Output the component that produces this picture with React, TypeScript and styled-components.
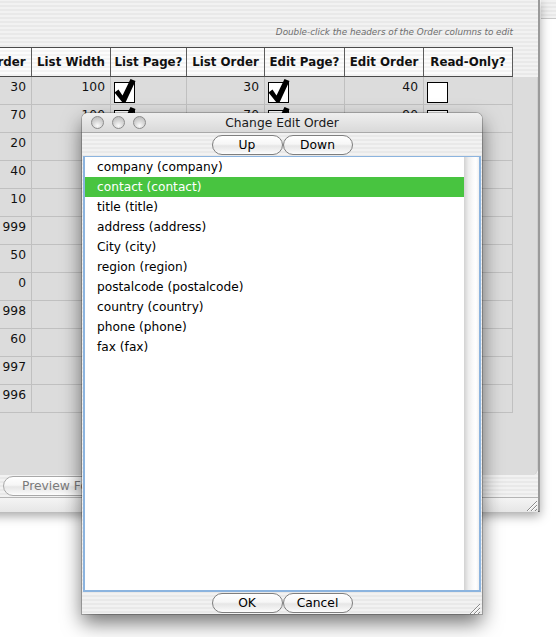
import React from 'react'
import styled, { createGlobalStyle } from 'styled-components'

const GlobalStyle = createGlobalStyle`
  body {
    margin: 0;
    background: #ffffff;
    font-family: 'DejaVu Sans', 'Liberation Sans', sans-serif;
  }
`

const pinstripes = 'repeating-linear-gradient(to bottom, #f2f2f2 0px, #f2f2f2 2px, #e9e9e9 2px, #e9e9e9 4px)'

const Desktop = styled.div`
  position: relative;
  width: 556px;
  height: 637px;
  overflow: hidden;
  background: #ffffff;
`

// window peeking in at the top right corner
const OtherWindow = styled.div`
  position: absolute;
  left: 541px;
  top: 0;
  width: 30px;
  height: 18px;
  background: ${pinstripes};
  border-bottom: 1px solid #c8c8c8;
`

const BackWindow = styled.div`
  position: absolute;
  left: -50px;
  top: -1px;
  width: 590px;
  height: 513px;
  box-sizing: border-box;
  display: flex;
  flex-direction: column;
  background: ${pinstripes};
  border-right: 2px solid #9a9a9a;
  border-bottom: 1px solid #4e4e4e;
  box-shadow: 0 4px 10px rgba(0, 0, 0, 0.35);
`

const HintRow = styled.div`
  height: 48px;
  flex: none;
  display: flex;
  align-items: flex-end;
  justify-content: flex-end;
  padding: 0 25px 9px 0;
  box-sizing: border-box;
  font-size: 8.8px;
  line-height: 12px;
  font-style: italic;
  color: #6e6e6e;
`

const TablePanel = styled.div`
  height: 428px;
  flex: none;
  display: flex;
  flex-direction: column;
`

const cols = '82px 79px 76px 78px 80px 79px 89px'

const HeaderRow = styled.div`
  display: grid;
  grid-template-columns: ${cols};
  width: 563px;
  height: 30px;
  box-sizing: border-box;
  border-top: 1px solid #4a4a4a;
  border-bottom: 1px solid #4a4a4a;
  background: repeating-linear-gradient(to bottom, #fcfcfc 0px, #fcfcfc 2px, #f3f3f3 2px, #f3f3f3 4px);
`

const HeaderCell = styled.div`
  border-right: 1px solid #5c5c5c;
  display: flex;
  align-items: center;
  justify-content: center;
  font-size: 11.8px;
  font-weight: bold;
  color: #111;
  white-space: nowrap;
  overflow: hidden;
`

const Body = styled.div`
  flex: 1;
  width: 588px;
  background: #dcdcdc;
  border-radius: 0 0 6px 0;
  border-right: 1px solid #cfcfcf;
  box-sizing: border-box;
`

const BodyRow = styled.div`
  display: grid;
  grid-template-columns: ${cols};
  width: 563px;
  height: 28px;
`

const NumCell = styled.div`
  border-right: 1px solid #c0c0c0;
  border-bottom: 1px solid #c0c0c0;
  text-align: right;
  padding: 1px 5px 0 0;
  font-size: 12.3px;
  line-height: 18px;
  color: #111;
  box-sizing: border-box;
`

const BoxCell = styled.div`
  border-right: 1px solid #c0c0c0;
  border-bottom: 1px solid #c0c0c0;
  padding-left: 3px;
  box-sizing: border-box;
  svg { display: block; overflow: visible; }
`

const ButtonRow = styled.div`
  height: 22px;
  flex: none;
  display: flex;
  align-items: center;
  padding-left: 53px;
`

const PillButton = styled.div<{ $width: number; $disabled?: boolean }>`
  width: ${({ $width }) => $width}px;
  height: 20px;
  box-sizing: border-box;
  border: 1px solid ${({ $disabled }) => ($disabled ? '#a8a8a8' : '#7e7e7e')};
  border-radius: 10px;
  background: linear-gradient(to bottom, #ffffff 0%, #f6f6f6 45%, #e6e6e6 55%, #f4f4f4 85%, #fdfdfd 100%);
  display: flex;
  align-items: center;
  justify-content: ${({ $disabled }) => ($disabled ? 'flex-start' : 'center')};
  padding-left: ${({ $disabled }) => ($disabled ? '18px' : '0')};
  font-size: 12.3px;
  color: ${({ $disabled }) => ($disabled ? '#7a7a7a' : '#000')};
  white-space: nowrap;
`

const StatusBar = styled.div`
  flex: 1;
  display: flex;
  justify-content: flex-end;
  align-items: flex-end;
  border-top: 1px solid #b4b4b4;
  background: linear-gradient(to bottom, #f4f4f4, #e6e6e6);
`

const Dialog = styled.div`
  position: absolute;
  left: 82px;
  top: 113px;
  width: 400px;
  height: 501px;
  display: flex;
  flex-direction: column;
  border-radius: 6px 6px 0 0;
  background: ${pinstripes};
  box-shadow: 0 0 0 1px rgba(0, 0, 0, 0.22), 0 9px 20px rgba(0, 0, 0, 0.55);
`

const TitleBar = styled.div`
  height: 20px;
  flex: none;
  position: relative;
  display: flex;
  align-items: center;
  justify-content: center;
  border-radius: 6px 6px 0 0;
  background: linear-gradient(to bottom, #efefef, #d9d9d9);
  border-bottom: 1px solid #a9a9a9;
  box-sizing: border-box;
  font-size: 12.3px;
  color: #1a1a1a;
`

const Lights = styled.div`
  position: absolute;
  left: 9px;
  top: 3px;
  display: flex;
  gap: 8px;
`

const Light = styled.div`
  width: 13px;
  height: 13px;
  border-radius: 50%;
  box-sizing: border-box;
  border: 1px solid #8c8c8c;
  background: radial-gradient(circle at 50% 78%, #fbfbfb 0%, #d8d8d8 45%, #b4b4b4 100%);
`

const Toolbar = styled.div`
  height: 23px;
  flex: none;
  display: flex;
  justify-content: center;
  align-items: flex-end;
  padding-bottom: 1px;
  box-sizing: border-box;
`

const ListBox = styled.div`
  flex: 1;
  margin: 0 1px;
  display: flex;
  border: 2px solid #8cb4df;
  border-top-width: 1px;
  background: #ffffff;
`

const Items = styled.div`
  flex: 1;
`

const Item = styled.div<{ $selected?: boolean }>`
  height: 20px;
  line-height: 20px;
  padding-left: 12px;
  font-size: 12.2px;
  color: ${({ $selected }) => ($selected ? '#ffffff' : '#000')};
  background: ${({ $selected }) => ($selected ? '#48c440' : 'transparent')};
`

const Track = styled.div`
  width: 15px;
  background: linear-gradient(to right, #d2d2d2 0%, #ededed 30%, #fafafa 60%, #ffffff 80%, #f0f0f0 100%);
`

const Footer = styled.div`
  height: 22px;
  flex: none;
  position: relative;
  display: flex;
  justify-content: center;
  align-items: flex-start;
  padding-top: 1px;
  box-sizing: border-box;
`

const GripCorner = styled.div`
  position: absolute;
  right: 1px;
  bottom: 0;
  width: 14px;
  height: 14px;
`

const CheckBox = ({ checked }: { checked: boolean }) => (
  <svg width='22' height='27' viewBox='0 0 22 27'>
    <rect x='0.5' y='5.5' width='20' height='20' fill='#fff' stroke='#000' />
    {checked && (
      <polygon points='0.5,15.5 4.5,12.5 8.5,18.5 16.5,2 21.5,4 11.5,25.5 8.5,25.5' fill='#000' />
    )}
  </svg>
)

const Grip = () => (
  <svg width='14' height='14' viewBox='0 0 14 14'>
    <path d='M13 3 L3 13 M13 7 L7 13 M13 11 L11 13' stroke='#8a8a8a' strokeWidth='1' />
    <path d='M13 4 L4 13 M13 8 L8 13' stroke='#ffffff' strokeWidth='1' />
  </svg>
)

// rows below the second one sit under the dialog, only the first column shows
const rows = [
  { o: '30', w: '100', lo: '30', eo: '40', checks: true },
  { o: '70', w: '100', lo: '70', eo: '90', checks: true },
  { o: '20' },
  { o: '40' },
  { o: '10' },
  { o: '999' },
  { o: '50' },
  { o: '0' },
  { o: '998' },
  { o: '60' },
  { o: '997' },
  { o: '996' },
]

const headers = ['Sort Order', 'List Width', 'List Page?', 'List Order', 'Edit Page?', 'Edit Order', 'Read-Only?']

const fields = [
  'company (company)',
  'contact (contact)',
  'title (title)',
  'address (address)',
  'City (city)',
  'region (region)',
  'postalcode (postalcode)',
  'country (country)',
  'phone (phone)',
  'fax (fax)',
]

export default function App() {
  return (
    <Desktop>
      <GlobalStyle />
      <OtherWindow />
      <BackWindow>
        <HintRow>Double-click the headers of the Order columns to edit</HintRow>
        <TablePanel>
          <HeaderRow>
            {headers.map((h) => <HeaderCell key={h}>{h}</HeaderCell>)}
          </HeaderRow>
          <Body>
            {rows.map((r) => (
              <BodyRow key={r.o}>
                <NumCell>{r.o}</NumCell>
                <NumCell>{r.w}</NumCell>
                <BoxCell>{r.checks && <CheckBox checked />}</BoxCell>
                <NumCell>{r.lo}</NumCell>
                <BoxCell>{r.checks && <CheckBox checked />}</BoxCell>
                <NumCell>{r.eo}</NumCell>
                <BoxCell>{r.checks && <CheckBox checked={false} />}</BoxCell>
              </BodyRow>
            ))}
          </Body>
        </TablePanel>
        <ButtonRow>
          <PillButton $width={130} $disabled>Preview Form</PillButton>
        </ButtonRow>
        <StatusBar><Grip /></StatusBar>
      </BackWindow>

      <Dialog>
        <TitleBar>
          <Lights>
            <Light />
            <Light />
            <Light />
          </Lights>
          Change Edit Order
        </TitleBar>
        <Toolbar>
          <PillButton $width={71}>Up</PillButton>
          <PillButton $width={70}>Down</PillButton>
        </Toolbar>
        <ListBox>
          <Items>
            {fields.map((f, i) => <Item key={f} $selected={i === 1}>{f}</Item>)}
          </Items>
          <Track />
        </ListBox>
        <Footer>
          <PillButton $width={71}>OK</PillButton>
          <PillButton $width={70}>Cancel</PillButton>
          <GripCorner><Grip /></GripCorner>
        </Footer>
      </Dialog>
    </Desktop>
  )
}
